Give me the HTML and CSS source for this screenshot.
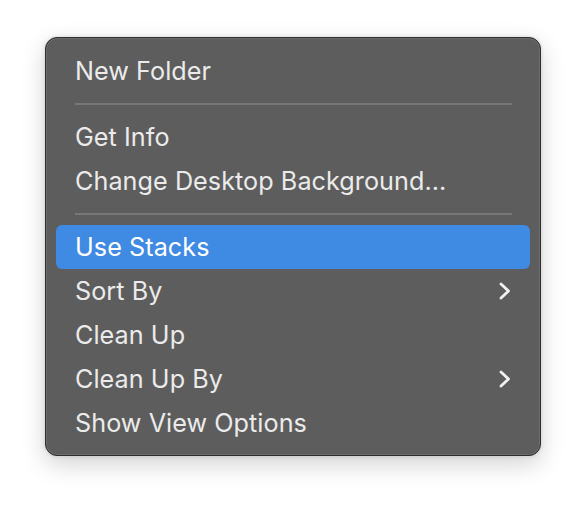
FILE: index.html
```html
<!DOCTYPE html>
<html>
<head>
<meta charset="utf-8">
<link rel="stylesheet" href="styles.css">
</head>
<body>
<div class="menu">
  <div class="item">New Folder</div>
  <div class="sep"></div>
  <div class="item">Get Info</div>
  <div class="item">Change Desktop Background...</div>
  <div class="sep"></div>
  <div class="item active">Use Stacks</div>
  <div class="item">Sort By<svg class="chev" viewBox="0 0 12 18" width="12" height="18"><path d="M2 2 L9.5 9 L2 16" fill="none" stroke="currentColor" stroke-width="2.8" stroke-linecap="round" stroke-linejoin="round"/></svg></div>
  <div class="item">Clean Up</div>
  <div class="item">Clean Up By<svg class="chev" viewBox="0 0 12 18" width="12" height="18"><path d="M2 2 L9.5 9 L2 16" fill="none" stroke="currentColor" stroke-width="2.8" stroke-linecap="round" stroke-linejoin="round"/></svg></div>
  <div class="item">Show View Options</div>
</div>
</body>
</html>
```
FILE: styles.css
```css
html {
  margin: 0;
  padding: 0;
  background: #ffffff;
  height: 100%;
}
body {
  margin: 0;
  min-height: 100%;
  box-sizing: border-box;
  padding: 37px 0 0 45px;
  font-family: Inter, "Liberation Sans", sans-serif;
}
.menu {
  box-sizing: border-box;
  width: 496px;
  padding: 11px 10px 10px 10px;
  background: #5d5d5d;
  border: 1px solid #2e2e2e;
  border-radius: 12px;
  box-shadow: inset 0 0 0 1px #6c6c6c, 0 8px 24px rgba(0,0,0,0.18), 0 0 4px rgba(0,0,0,0.12);
}
.item {
  height: 44px;
  display: flex;
  align-items: center;
  justify-content: space-between;
  padding: 0 19px;
  color: #ebebeb;
  font-size: 25.2px;
  letter-spacing: 0.05px;
  border-radius: 6px;
}
.item.active {
  background: #3f8ae2;
  color: #ffffff;
}
.chev {
  color: #f2f2f2;
}
.sep {
  height: 22px;
  display: flex;
  align-items: center;
  padding: 0 18px 0 19px;
}
.sep::before {
  content: "";
  flex: 1;
  height: 2px;
  background: #777777;
}
```
